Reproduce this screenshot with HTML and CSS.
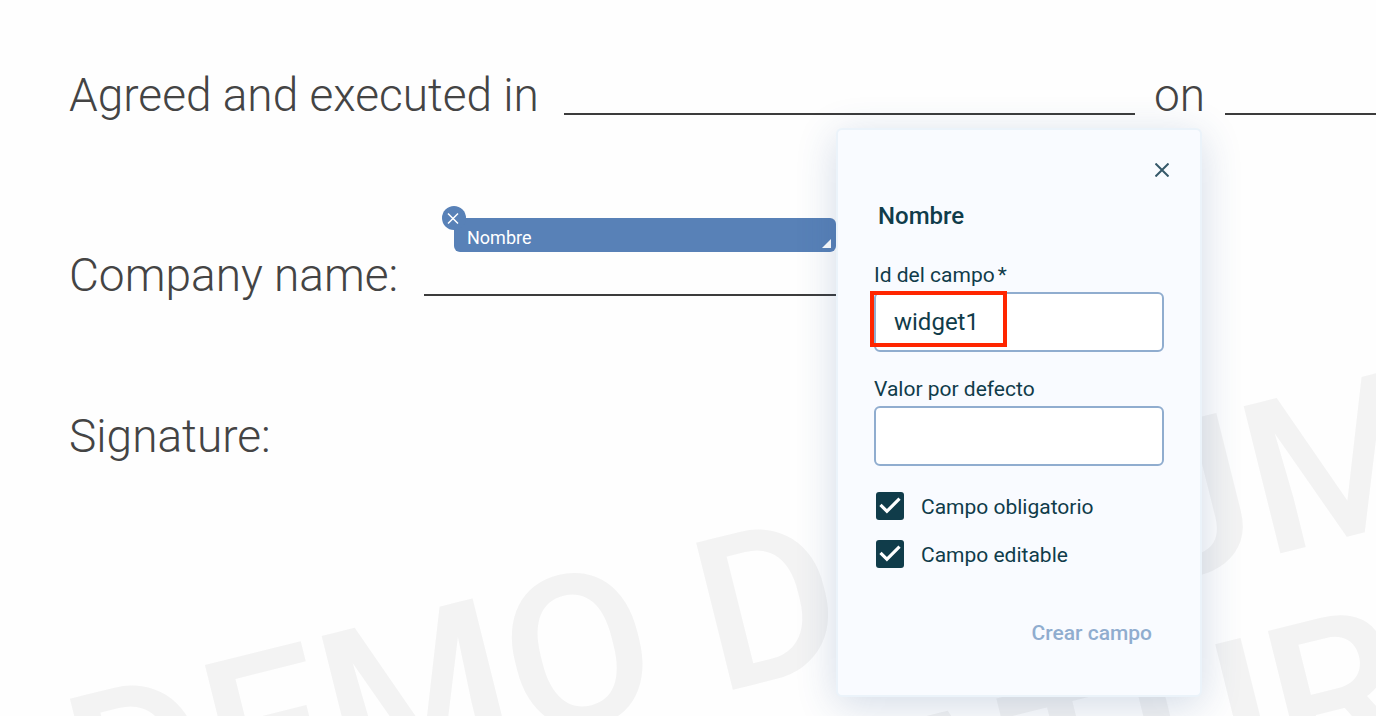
FILE: index.html
```html
<!DOCTYPE html>
<html lang="es">
<head>
  <meta charset="UTF-8">
  <meta name="viewport" content="width=device-width, initial-scale=1.0">
  <title>Nombre</title>
  <link rel="stylesheet" href="styles.css">
</head>
<body>
  <main class="document">
    <div class="watermark" aria-hidden="true">DEMO DOCUMENT<br>SIGNATURIT</div>

    <div class="line">
      <span>Agreed and executed in</span>
      <span class="blank blank-place"></span>
      <span>on</span>
      <span class="blank"></span>
    </div>
    <div class="line line-company">
      <span>Company name:</span>
      <span class="blank blank-company"></span>
    </div>
    <div class="line">
      <span>Signature:</span>
    </div>

    <div class="widget">
      <span>Nombre</span>
      <button class="widget-remove" type="button" aria-label="Eliminar">
        <svg viewBox="0 0 12 12" width="12" height="12"><path d="M1 1.5L11 11.5M11 1.5L1 11.5"/></svg>
      </button>
      <span class="widget-resize"></span>
    </div>

    <form class="panel">
      <button class="panel-close" type="button" aria-label="Cerrar">
        <svg viewBox="0 0 14 14" width="14" height="14"><path d="M0.5 0.5L13.5 13.5M13.5 0.5L0.5 13.5"/></svg>
      </button>
      <h2>Nombre</h2>

      <div class="field">
        <label for="field-id">Id del campo<span class="required">*</span></label>
        <input type="text" id="field-id" value="widget1">
        <div class="highlight"></div>
      </div>
      <div class="field">
        <label for="field-value">Valor por defecto</label>
        <input type="text" id="field-value">
      </div>

      <label class="check"><input type="checkbox" checked><span>Campo obligatorio</span></label>
      <label class="check"><input type="checkbox" checked><span>Campo editable</span></label>

      <button class="submit" type="button">Crear campo</button>
    </form>
  </main>
</body>
</html>
```
FILE: styles.css
```css
* {
  box-sizing: border-box;
}

body {
  margin: 0;
  font-family: Roboto, sans-serif;
  background: #fefefe;
  color: #103c4a;
}

.document {
  position: relative;
  min-height: 100vh;
  padding: 67px 0 0 69px;
  overflow: hidden;
}

/* document text */
.line {
  position: relative;
  display: flex;
  height: 56px;
  margin-bottom: 124px;
  font-size: 46px;
  font-weight: 300;
  line-height: 56px;
  color: #444;
  white-space: nowrap;
}

.line-company {
  margin-bottom: 105px;
}

.blank {
  flex: 1;
  margin: 0 0 8px 20px;
  border-bottom: 2px solid #3c3c3c;
}

.blank-place {
  flex: 0 0 571px;
  margin-left: 25px;
  margin-right: 19px;
}

.blank-company {
  flex: 0 0 571px;
  margin-left: 26px;
  margin-bottom: 7px;
}

.watermark {
  position: absolute;
  top: 670px;
  left: 47px;
  font-size: 213px;
  font-weight: 500;
  line-height: 224px;
  text-align: center;
  white-space: nowrap;
  color: #f3f3f3;
  transform: rotate(-14deg);
  transform-origin: 0 0;
}

/* placed field */
.widget {
  position: absolute;
  top: 218px;
  left: 454px;
  width: 382px;
  height: 34px;
  padding: 8px 13px;
  border-radius: 6px;
  background: #5881b7;
  color: #fff;
  font-size: 18px;
  line-height: 24px;
}

.widget-remove {
  position: absolute;
  top: -12px;
  left: -12px;
  display: flex;
  align-items: center;
  justify-content: center;
  width: 24px;
  height: 24px;
  padding: 0 2px 0 0;
  border: none;
  border-radius: 50%;
  background: #5881b7;
  cursor: pointer;
}

.widget-remove path {
  stroke: #fff;
  stroke-width: 1.5;
}

.widget-resize {
  position: absolute;
  right: 5px;
  bottom: 4px;
  width: 9px;
  height: 9px;
  background: #fff;
  clip-path: polygon(100% 0, 100% 100%, 0 100%);
}

/* settings panel */
.panel {
  position: absolute;
  top: 128px;
  left: 836px;
  display: flex;
  flex-direction: column;
  width: 366px;
  padding: 28px 36px 48px;
  border: 2px solid #ebf3fa;
  border-radius: 6px;
  background: #f9fbff;
  box-shadow: 0 8px 40px rgba(40, 80, 140, 0.2);
}

.panel-close {
  align-self: flex-end;
  width: 24px;
  height: 24px;
  margin-right: -10px;
  padding: 0;
  border: none;
  background: none;
  line-height: 0;
  cursor: pointer;
}

.panel-close path {
  stroke: #36596a;
  stroke-width: 2;
}

h2 {
  margin: 18px 0 30px 4px;
  font-size: 24px;
  font-weight: 500;
  line-height: 32px;
}

.field {
  position: relative;
  margin-bottom: 24px;
}

.field label {
  display: block;
  margin-bottom: 4px;
  font-size: 21px;
  line-height: 26px;
}

.required {
  margin-left: 3px;
}

.field input {
  display: block;
  width: 290px;
  height: 60px;
  padding: 0 18px;
  border: 2px solid #90adcf;
  border-radius: 6px;
  background: #fff;
  color: inherit;
  font: 24px Roboto, sans-serif;
}

.highlight {
  position: absolute;
  top: 29px;
  left: -4px;
  width: 137px;
  height: 56px;
  border: 4px solid #ff2600;
}

.check {
  display: flex;
  align-items: center;
  gap: 17px;
  height: 32px;
  margin: 0 0 16px 2px;
  font-size: 21px;
  line-height: 26px;
}

.check span {
  padding-top: 2px;
}

.check input {
  appearance: none;
  width: 28px;
  height: 28px;
  margin: 0;
  border-radius: 3px;
  background: #103c4a;
}

.check input:checked::before {
  content: "";
  display: block;
  width: 28px;
  height: 28px;
  background: #fff;
  clip-path: polygon(12% 50%, 20% 42%, 39% 61%, 80% 20%, 88% 28%, 39% 77%);
}

.submit {
  align-self: flex-end;
  margin: 33px 12px 0 0;
  padding: 0;
  border: none;
  background: none;
  color: #90adcf;
  font: 500 21px/28px Roboto, sans-serif;
  cursor: pointer;
}
```
